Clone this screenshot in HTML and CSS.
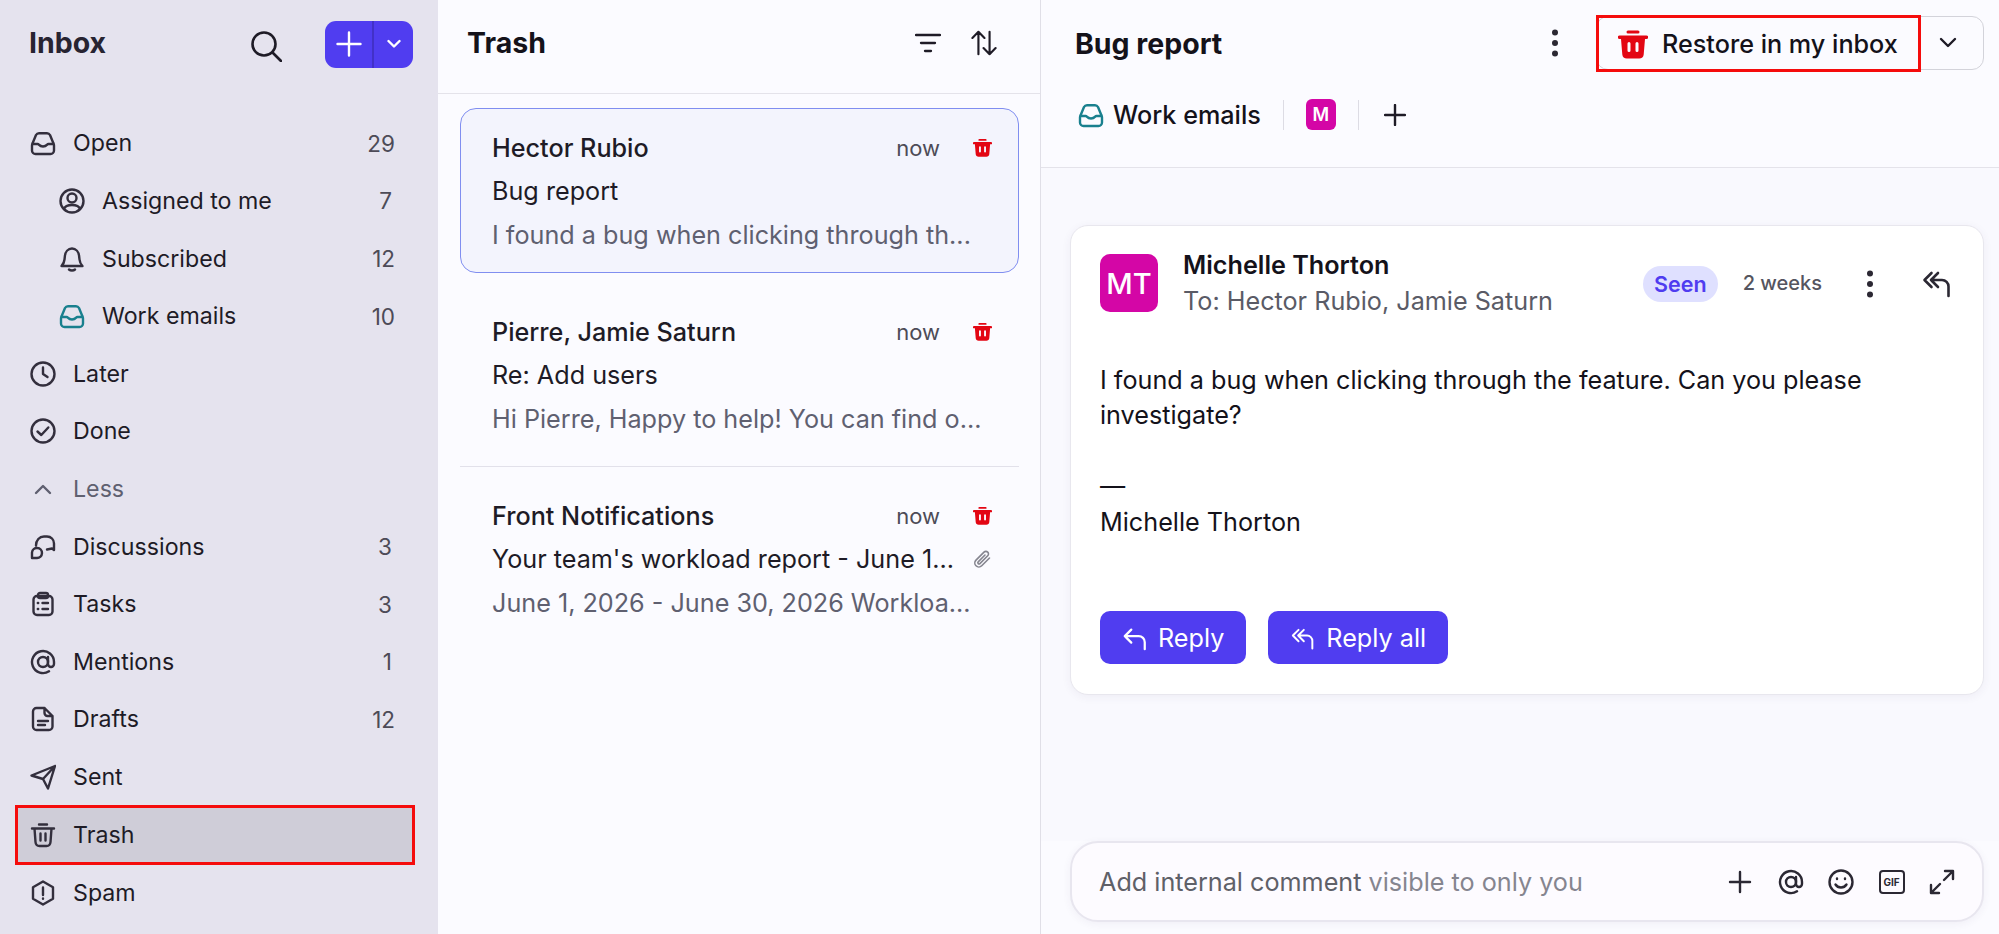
FILE: index.html
```html
<!DOCTYPE html>
<html lang="en">
<head>
    <meta charset="UTF-8">
    <title>Trash - Bug report</title>
    <link rel="stylesheet" href="styles.css">
</head>
<body>
<svg class="defs" width="0" height="0">
    <symbol id="i-inbox" viewBox="0 0 26 26"><path d="M2 15.500v5a3.500 3.500 0 0 0 3.500 3.500h15a3.500 3.500 0 0 0 3.500-3.500v-5c0-1-.3-2-.8-2.800L20 5a3.500 3.500 0 0 0-3-1.800H9A3.500 3.500 0 0 0 6 5l-3.200 7.700c-.5.800-.8 1.800-.8 2.800zM2.500 14h5.300c1 0 1.500 2.500 5.200 2.500s4.200-2.500 5.200-2.500h5.300"/></symbol>
    <symbol id="i-user" viewBox="0 0 26 26"><circle cx="13" cy="13" r="11.500"/><circle cx="13" cy="10" r="4.500"/><path d="M5 21c1-3 4-4 8-4s7 1 8 4"/></symbol>
    <symbol id="i-bell" viewBox="0 0 26 26"><path d="M2.500 20h21c-2-2-2.700-3.500-3-6.500l-.4-3.500C19.700 6 17 2.500 13 2.500S6.300 6 5.900 10l-.4 3.500c-.3 3-1 4.500-3 6.500zM10 23.500c1.500 1.300 4.500 1.300 6 0"/></symbol>
    <symbol id="i-clock" viewBox="0 0 26 26"><circle cx="13" cy="13" r="11.500"/><path d="M13 6.500V13l4.500 3"/></symbol>
    <symbol id="i-check" viewBox="0 0 26 26"><circle cx="13" cy="13" r="11.500"/><path d="M7.500 13.500l3.800 3.500 7-7.500"/></symbol>
    <symbol id="i-chat" viewBox="0 0 26 26"><path d="M6 11.500C6 6 9.500 2.500 14 2.500h3c4 0 7 3 7 7v6.500l-2-1.500-5 1M2 24v-5.500a5 5 0 1 1 5 5.500z"/></symbol>
    <symbol id="i-tasks" viewBox="0 0 26 26"><rect x="3.500" y="5" width="19" height="19" rx="3.500"/><rect x="8" y="2" width="10" height="5" rx="2"/><path d="M12.500 12H18M12.500 18H18M7.800 12h.4M7.800 18h.4"/></symbol>
    <symbol id="i-at" viewBox="0 0 26 26"><circle cx="13" cy="13" r="5"/><path d="M18 8v7a3 3 0 0 0 6 0v-2a11 11 0 1 0-5 9.300"/></symbol>
    <symbol id="i-doc" viewBox="0 0 26 26"><path d="M6.500 2h8l8 8v10.500a3.500 3.500 0 0 1-3.500 3.500H6.500A3.500 3.500 0 0 1 3 20.500v-15A3.500 3.500 0 0 1 6.500 2zM14.500 2v5a3 3 0 0 0 3 3h5M8 15h10M8 19h7"/></symbol>
    <symbol id="i-send" viewBox="0 0 26 26"><path d="M1.500 11.500L25 2 18 24.500l-5-9.500zM25 2L13 15"/></symbol>
    <symbol id="i-trash" viewBox="0 0 26 26"><path d="M2 6.500h22M9 2.500h8M4.500 6.500l1 13.500c.2 2.500 1.500 4 4 4h7c2.500 0 3.800-1.500 4-4l1-13.500M10.500 11.500v7M15.500 11.500v7"/></symbol>
    <symbol id="i-spam" viewBox="0 0 26 26"><path d="M13 1.500l10 5.800v11.400l-10 5.800-10-5.800V7.300zM13 7.500v7.500M13 18.500v.2"/></symbol>
    <symbol id="i-redtrash" viewBox="0 0 30 30"><path d="M10 1.500h10a1.500 1.500 0 0 1 0 3H10a1.500 1.500 0 0 1 0-3zM1.500 6.500h27a1.500 1.500 0 0 1 0 3.500H27l-1.300 15.500c-.2 2.500-2 4-4.500 4H8.800c-2.500 0-4.300-1.500-4.500-4L3 10H1.500a1.750 1.750 0 0 1 0-3.500zM11 13a1.500 1.500 0 0 0-1.500 1.500v7a1.500 1.500 0 0 0 3 0v-7A1.500 1.500 0 0 0 11 13zm8 0a1.500 1.500 0 0 0-1.500 1.500v7a1.500 1.500 0 0 0 3 0v-7A1.500 1.500 0 0 0 19 13z" fill-rule="evenodd"/></symbol>
    <symbol id="i-replyall" viewBox="0 0 32 32"><path d="M17 6l-7 7 7 7M10 13h11a6.500 6.500 0 0 1 6.500 6.500V29M10.500 6l-7 7 7 7"/></symbol>
    <symbol id="i-reply" viewBox="0 0 28 28"><path d="M10 5l-7 7 7 7M3 12h15a6.500 6.500 0 0 1 6.500 6.500V26"/></symbol>
    <symbol id="i-kebab" viewBox="0 0 10 30"><circle cx="5" cy="4.500" r="3"/><circle cx="5" cy="15" r="3"/><circle cx="5" cy="25.500" r="3"/></symbol>
</svg>

<div class="app">
    <nav class="sidebar">
        <div class="side-head">
            <h1 class="side-title">Inbox</h1>
            <svg class="search" viewBox="0 0 32 32"><circle cx="14" cy="14" r="11.500"/><path d="M22.500 22.500L31 31"/></svg>
            <div class="compose">
                <span class="compose-plus"><svg viewBox="0 0 26 26"><path d="M13 1.500v23M1.500 13h23"/></svg></span>
                <span class="compose-more"><svg viewBox="0 0 14 10"><path d="M1.500 2l5.500 5.500L12.500 2"/></svg></span>
            </div>
        </div>
        <ul class="nav">
            <li class="nav-row"><svg class="ico"><use href="#i-inbox"/></svg><span class="nav-label">Open</span><span class="count">29</span></li>
            <li class="nav-row sub"><svg class="ico"><use href="#i-user"/></svg><span class="nav-label">Assigned to me</span><span class="count one">7</span></li>
            <li class="nav-row sub"><svg class="ico"><use href="#i-bell"/></svg><span class="nav-label">Subscribed</span><span class="count">12</span></li>
            <li class="nav-row sub"><svg class="ico teal"><use href="#i-inbox"/></svg><span class="nav-label">Work emails</span><span class="count">10</span></li>
            <li class="nav-row"><svg class="ico"><use href="#i-clock"/></svg><span class="nav-label">Later</span></li>
            <li class="nav-row"><svg class="ico"><use href="#i-check"/></svg><span class="nav-label">Done</span></li>
            <li class="nav-row less"><svg class="ico" viewBox="0 0 26 26"><path d="M6 17l7-7 7 7"/></svg><span class="nav-label">Less</span></li>
            <li class="nav-row"><svg class="ico"><use href="#i-chat"/></svg><span class="nav-label">Discussions</span><span class="count one">3</span></li>
            <li class="nav-row"><svg class="ico"><use href="#i-tasks"/></svg><span class="nav-label">Tasks</span><span class="count one">3</span></li>
            <li class="nav-row"><svg class="ico"><use href="#i-at"/></svg><span class="nav-label">Mentions</span><span class="count one">1</span></li>
            <li class="nav-row"><svg class="ico"><use href="#i-doc"/></svg><span class="nav-label">Drafts</span><span class="count">12</span></li>
            <li class="nav-row"><svg class="ico"><use href="#i-send"/></svg><span class="nav-label">Sent</span></li>
            <li class="nav-row active"><svg class="ico"><use href="#i-trash"/></svg><span class="nav-label">Trash</span></li>
            <li class="nav-row"><svg class="ico"><use href="#i-spam"/></svg><span class="nav-label">Spam</span></li>
        </ul>
    </nav>

    <section class="list">
        <header class="list-head">
            <h2 class="heading">Trash</h2>
            <svg class="filter" viewBox="0 0 26 20"><path d="M1 2h24M6 10h14M10 18h6"/></svg>
            <svg class="sort" viewBox="0 0 28 28"><path d="M8 26V2M1.500 8.500L8 2l6.500 6.500M20 2v24M13.500 19.500L20 26l6.500-6.500"/></svg>
        </header>
        <div class="items">
            <article class="item selected">
                <div class="line"><span class="who">Hector Rubio</span><span class="now">now</span><svg class="tiny red"><use href="#i-redtrash"/></svg></div>
                <div class="line"><span class="subject">Bug report</span></div>
                <div class="line"><span class="preview">I found a bug when clicking through th...</span></div>
            </article>
            <div class="sep clear"></div>
            <article class="item">
                <div class="line"><span class="who">Pierre, Jamie Saturn</span><span class="now">now</span><svg class="tiny red"><use href="#i-redtrash"/></svg></div>
                <div class="line"><span class="subject">Re: Add users</span></div>
                <div class="line"><span class="preview">Hi Pierre, Happy to help! You can find o...</span></div>
            </article>
            <div class="sep"></div>
            <article class="item">
                <div class="line"><span class="who">Front Notifications</span><span class="now">now</span><svg class="tiny red"><use href="#i-redtrash"/></svg></div>
                <div class="line"><span class="subject">Your team's workload report - June 1...</span><svg class="clip" viewBox="0 0 20 20"><path d="M17.500 9l-7.800 7.800a4 4 0 0 1-5.700-5.700l8-8a2.600 2.600 0 0 1 3.700 3.700l-7.800 7.800a1.200 1.200 0 0 1-1.700-1.700L13 6"/></svg></div>
                <div class="line"><span class="preview">June 1, 2026 - June 30, 2026 Workloa...</span></div>
            </article>
        </div>
    </section>

    <main class="detail">
        <header class="detail-head">
            <h2 class="heading">Bug report</h2>
            <svg class="kebab"><use href="#i-kebab"/></svg>
            <div class="split">
                <button class="restore"><svg class="restore-ico red"><use href="#i-redtrash"/></svg>Restore in my inbox</button>
                <button class="split-more"><svg viewBox="0 0 18 12"><path d="M2 2l7 7 7-7"/></svg></button>
            </div>
        </header>
        <div class="tags">
            <svg class="ico teal"><use href="#i-inbox"/></svg>
            <span class="tag-name">Work emails</span>
            <span class="tag-sep"></span>
            <span class="tag-avatar">M</span>
            <span class="tag-sep"></span>
            <svg class="tag-plus" viewBox="0 0 22 22"><path d="M11 1v20M1 11h20"/></svg>
        </div>
        <div class="thread">
            <article class="message">
                <div class="msg-head">
                    <div class="avatar">MT</div>
                    <div class="msg-people">
                        <div class="sender">Michelle Thorton</div>
                        <div class="to">To: Hector Rubio, Jamie Saturn</div>
                    </div>
                    <span class="seen">Seen</span>
                    <span class="age">2 weeks</span>
                    <svg class="kebab small"><use href="#i-kebab"/></svg>
                    <svg class="msg-reply"><use href="#i-replyall"/></svg>
                </div>
                <div class="msg-body">
                    <p>I found a bug when clicking through the feature. Can you please investigate?</p>
                    <p>—<br>Michelle Thorton</p>
                </div>
                <div class="msg-actions">
                    <button class="btn"><svg class="btn-ico"><use href="#i-reply"/></svg>Reply</button>
                    <button class="btn"><svg class="btn-ico"><use href="#i-replyall"/></svg>Reply all</button>
                </div>
            </article>
        </div>
        <div class="composer">
            <span class="hint">Add internal comment <span class="hint-soft">visible to only you</span></span>
            <div class="tools">
                <svg viewBox="0 0 26 26"><path d="M13 3v20M3 13h20"/></svg>
                <svg><use href="#i-at"/></svg>
                <svg viewBox="0 0 26 26"><circle cx="13" cy="13" r="11.500"/><path d="M7.500 15.500c2.500 4 8.500 4 11 0M9 9.500v.5M17 9.500v.5"/></svg>
                <span class="gif">GIF</span>
                <svg viewBox="0 0 26 26"><path d="M15 11L24 2M16 2h8v8M11 15l-9 9M2 16v8h8"/></svg>
            </div>
        </div>
    </main>
</div>
</body>
</html>
```

FILE: styles.css
```css
* {
    box-sizing: border-box;
}

html, body {
    margin: 0;
    height: 100%;
    overflow: hidden;
}

body {
    font-family: Inter, "Liberation Sans", sans-serif;
    font-size: 25.200px;
    color: #1e1b26;
    background-color: #fbfbff;
}

svg {
    fill: none;
    stroke: currentColor;
    stroke-width: 2.4;
    stroke-linecap: round;
    stroke-linejoin: round;
    flex: none;
}

.defs {
    position: absolute;
}

h1, h2, p, ul {
    margin: 0;
    padding: 0;
}

button {
    font: inherit;
    border: none;
    background: none;
    color: inherit;
    padding: 0;
}

.app {
    display: grid;
    grid-template-columns: 438px 602px 1fr;
    height: 934px;
}

/* sidebar */
.sidebar {
    background-color: #e5e3ee;
    padding: 0 15px 0 0;
}

.side-head {
    display: flex;
    align-items: center;
    height: 88px;
    padding: 0 10px 0 29px;
}

.side-title {
    font-size: 28.500px;
    font-weight: 700;
    flex: 1;
    margin-top: -3px;
    color: #272431;
}

.search {
    width: 32px;
    height: 32px;
    margin: 4px 43px 0 0;
    stroke-width: 2.6;
}

.compose {
    display: flex;
    width: 88px;
    height: 47px;
    border-radius: 11px;
    background-color: #503df0;
    color: #fff;
}

.compose-plus, .compose-more {
    display: flex;
    align-items: center;
    justify-content: center;
}

.compose-plus {
    width: 49px;
    border-right: 2px solid #4231c8;
}

.compose-plus svg {
    width: 26px;
    height: 26px;
}

.compose-more {
    flex: 1;
}

.compose-more svg {
    width: 14px;
    height: 10px;
}

.nav {
    list-style: none;
    padding-top: 26.600px;
    font-size: 23.200px;
}

.nav-row {
    display: flex;
    align-items: center;
    height: 57.600px;
    padding: 0 28px 0 30px;
}

.nav-row.sub {
    padding-left: 59px;
}

.ico {
    width: 26px;
    height: 26px;
    margin-right: 17px;
    color: #332f3d;
}

.teal {
    color: #19808e;
}

.nav-label {
    flex: 1;
}

.count {
    font-size: 22.500px;
    color: #4d4b57;
}

.count.one {
    margin-right: 3px;
}

.less {
    color: #5f6070;
}

.less .ico {
    color: #5f6070;
}

.active {
    margin-left: 15px;
    width: 400px;
    padding-left: 12px;
    height: 60px;
    margin-top: -1px;
    margin-bottom: -1px;
    background-color: #cfcdd8;
    border: 3px solid #f50c0c;
}

/* list */
.list {
    background-color: #fbfbff;
}

.list-head {
    display: flex;
    align-items: center;
    height: 94px;
    padding: 0 43px 8px 29px;
    border-bottom: 1px solid #e4e3ea;
}

.heading {
    flex: 1;
    font-size: 28.500px;
    font-weight: 700;
    color: #14121a;
}

.filter {
    width: 26px;
    height: 20px;
    margin-right: 30px;
    stroke-width: 2.3;
}

.sort {
    width: 26px;
    height: 26px;
    stroke-width: 2.3;
}

.items {
    padding: 14px 21px 0 22px;
}

.item {
    height: 165px;
    padding: 17px 26px 0 31px;
    border: 1px solid transparent;
    border-radius: 16px;
}

.selected {
    background-color: #f3f4fd;
    border-color: #808ef0;
}

.sep {
    height: 1px;
    margin: 9px 0;
    background-color: #e2e1ea;
}

.sep.clear {
    background: none;
}

.line {
    display: flex;
    align-items: center;
    height: 43.500px;
}

.who {
    flex: 1;
    font-weight: 500;
}

.now {
    font-size: 22px;
    color: #4d4b57;
    margin-right: 33px;
}

.tiny {
    width: 19px;
    height: 19px;
}

.red {
    fill: #e30613;
    stroke: none;
    color: #e30613;
}

.subject {
    flex: 1;
}

.preview {
    color: #5f6070;
}

.clip {
    width: 20px;
    height: 20px;
    color: #85858f;
    stroke-width: 1.600;
}

/* detail */
.detail {
    display: flex;
    flex-direction: column;
    height: 934px;
    border-left: 1px solid #e0dfe7;
}

.detail-head {
    display: flex;
    align-items: center;
    height: 86px;
    padding: 0 15px 0 34px;
}

.kebab {
    width: 10px;
    height: 30px;
    margin-right: 36px;
    fill: #2b2833;
    stroke: none;
}

.split {
    display: flex;
    height: 54px;
    border: 1px solid #d3d3da;
    border-radius: 12px;
}

.restore {
    display: flex;
    align-items: center;
    position: relative;
    width: 325px;
    height: 57px;
    margin: -2px 0 0 -1px;
    padding-left: 19px;
    border: 3px solid #f50c0c;
    color: #14121a;
    font-weight: 500;
}

.restore-ico {
    width: 30px;
    height: 30px;
    margin-right: 14px;
}

.split-more {
    display: flex;
    align-items: center;
    justify-content: center;
    width: 62px;
    padding-right: 8px;
}

.split-more svg {
    width: 18px;
    height: 12px;
    stroke-width: 2.400;
}

.tags {
    display: flex;
    align-items: center;
    height: 82px;
    padding: 0 0 24px 37px;
    border-bottom: 1px solid #e4e3ea;
}

.tags .ico {
    margin-right: 9px;
}

.tag-name {
    font-weight: 500;
    color: #14121a;
    margin-right: 22px;
}

.tag-sep {
    width: 1px;
    height: 30px;
    background-color: #dddce4;
}

.tag-avatar {
    display: flex;
    align-items: center;
    justify-content: center;
    width: 30px;
    height: 31px;
    margin: 0 22px;
    border-radius: 6px;
    background-color: #d406a6;
    color: #fff;
    font-size: 18px;
    font-weight: 600;
}

.tag-plus {
    width: 22px;
    height: 22px;
    margin-left: 25px;
}

.thread {
    flex: 1;
    padding: 57px 15px 0 29px;
    background-color: #f9f9fe;
}

.message {
    height: 470px;
    padding: 28px 29px 0 29px;
    border: 1px solid #e8e7ee;
    border-radius: 18px;
    background-color: #fff;
    box-shadow: 0 2px 10px rgba(60, 50, 110, 0.06);
}

.msg-head {
    display: flex;
    align-items: center;
}

.avatar {
    display: flex;
    align-items: center;
    justify-content: center;
    width: 58px;
    height: 58px;
    margin: -3px 25px 0 0;
    border-radius: 10px;
    background-color: #d406a6;
    color: #fff;
    font-size: 29px;
    font-weight: 500;
}

.msg-people {
    flex: 1;
}

.sender {
    font-weight: 600;
    color: #14121a;
    line-height: 28px;
    margin-top: -3px;
}

.to {
    color: #5a5b66;
    line-height: 28px;
    margin-top: 8px;
}

.seen {
    padding: 0 11px;
    height: 36px;
    line-height: 36px;
    border-radius: 18px;
    background-color: #dfe0ff;
    color: #4f3cf0;
    font-size: 21.500px;
    font-weight: 600;
    margin: -2px 25px 0 0;
}

.age {
    font-size: 20px;
    font-weight: 500;
    color: #55555f;
    margin: -4px 43px 0 0;
}

.kebab.small {
    margin: -2px 46px 0 0;
}

.msg-reply {
    width: 32px;
    height: 32px;
    margin: -3px 1px 0 0;
    stroke-width: 2.6;
    color: #2b2833;
}

.msg-body {
    margin-top: 47.500px;
    line-height: 35.500px;
    color: #14121a;
}

.msg-body p + p {
    margin-top: 35.500px;
}

.msg-actions {
    display: flex;
    gap: 22px;
    margin-top: 71px;
}

.btn {
    display: flex;
    align-items: center;
    height: 53px;
    padding: 0 22px;
    border-radius: 10px;
    background-color: #503df0;
    color: #fff;
}

.btn-ico {
    width: 26px;
    height: 26px;
    margin-right: 10px;
}

.composer {
    display: flex;
    align-items: center;
    height: 81px;
    margin: 0 15px 12px 29px;
    padding: 0 27px 0 27px;
    border: 2px solid #e8e6ef;
    border-radius: 28px;
    background-color: #fdfbff;
    box-shadow: 0 2px 8px rgba(60, 50, 110, 0.06);
}

.hint {
    flex: 1;
    color: #5f6068;
}

.hint-soft {
    color: #85858f;
}

.tools {
    display: flex;
    align-items: center;
    gap: 24.500px;
}

.tools svg {
    width: 26px;
    height: 26px;
    color: #2b2833;
}

.gif {
    display: flex;
    align-items: center;
    justify-content: center;
    width: 26px;
    height: 24px;
    border: 2px solid #2b2833;
    border-radius: 4px;
    font-size: 10px;
    font-weight: 700;
    color: #2b2833;
}
```
